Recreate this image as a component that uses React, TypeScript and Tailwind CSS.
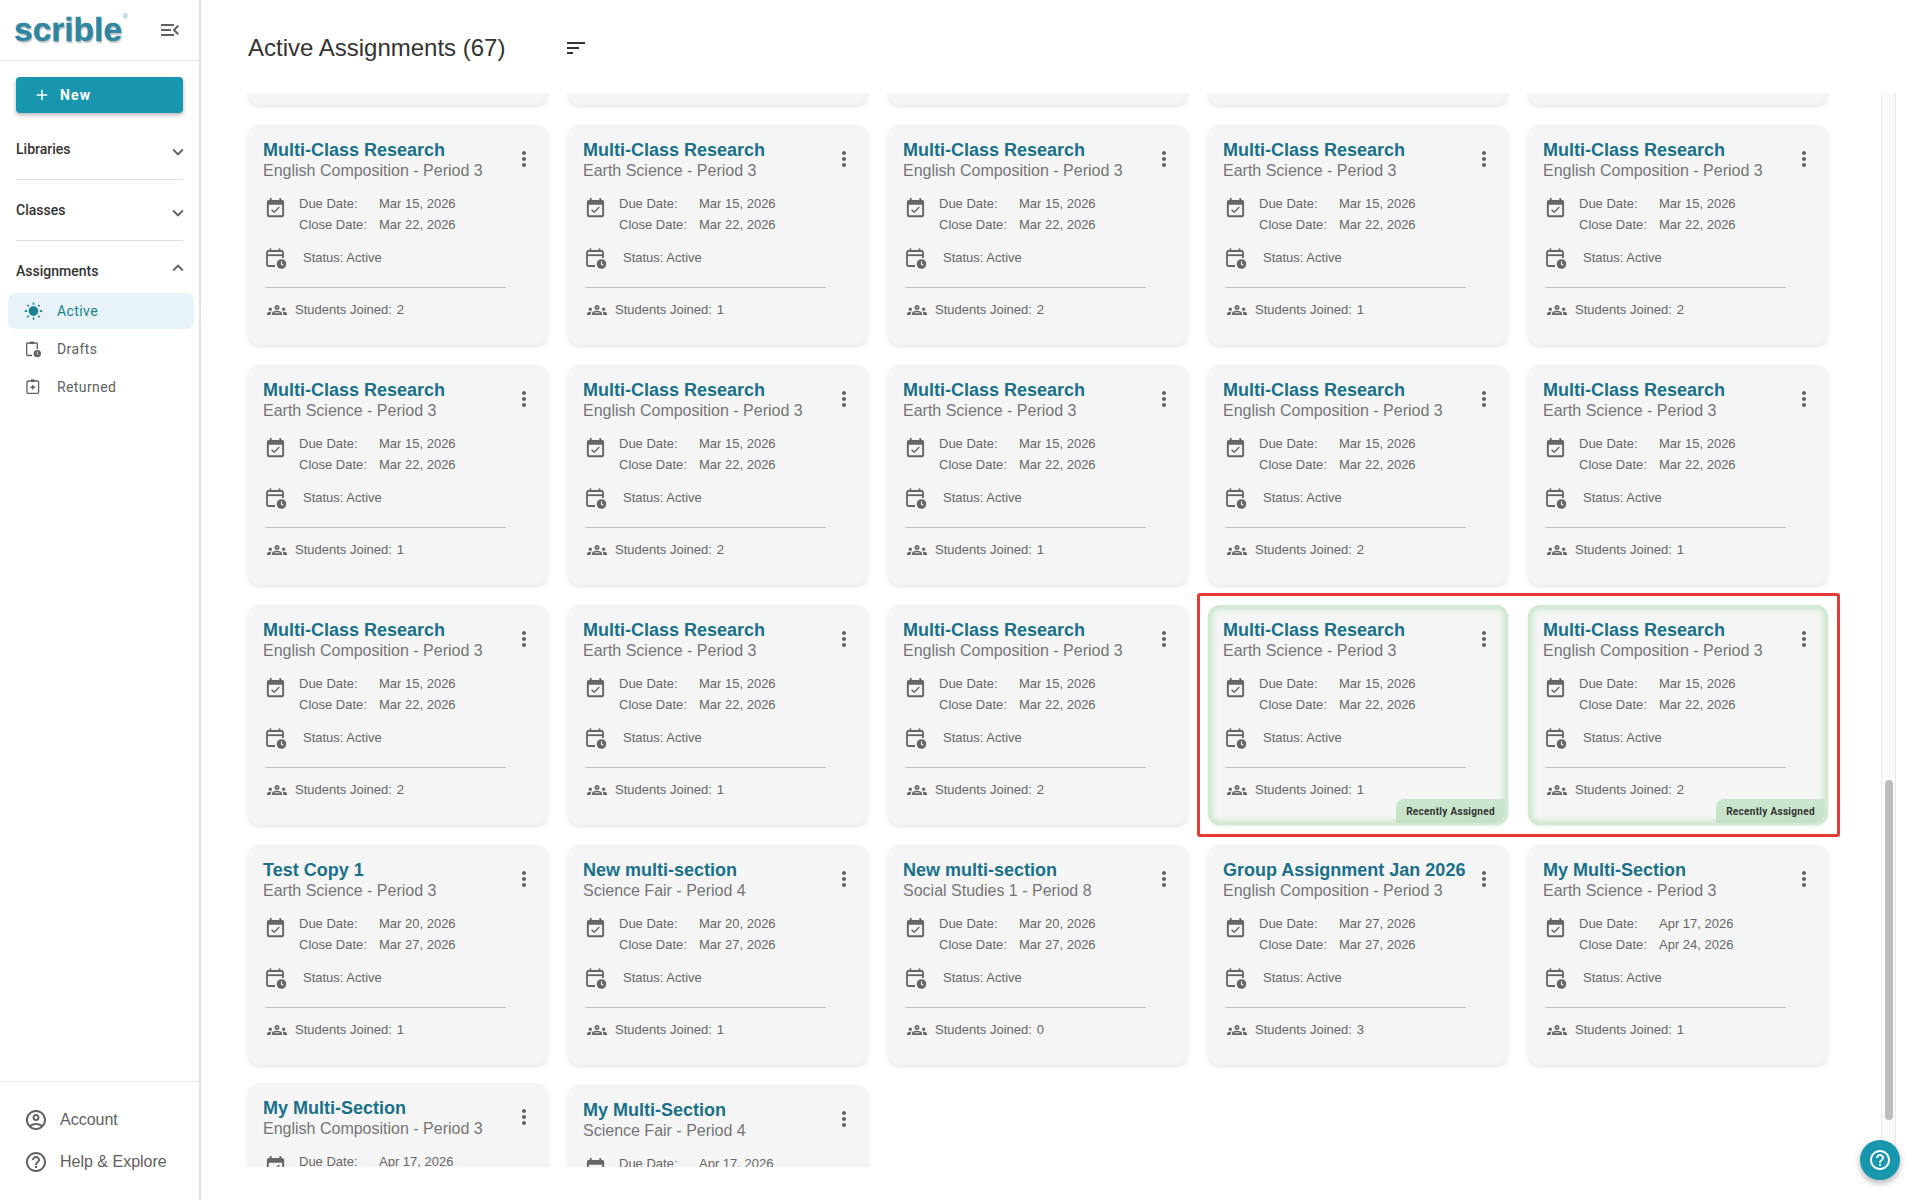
import { ReactNode } from 'react';

interface Assignment {
  title: string;
  subject: string;
  due: string;
  close: string;
  joined: number;
  recent?: boolean;
}

const ENGLISH = 'English Composition - Period 3';
const EARTH = 'Earth Science - Period 3';

function multiClass(subject: string, joined: number, recent = false): Assignment {
  return { title: 'Multi-Class Research', subject, due: 'Mar 15, 2026', close: 'Mar 22, 2026', joined, recent };
}

const rows: Assignment[] = [
  multiClass(ENGLISH, 2),
  multiClass(EARTH, 1),
  multiClass(ENGLISH, 2),
  multiClass(EARTH, 1),
  multiClass(ENGLISH, 2),

  multiClass(EARTH, 1),
  multiClass(ENGLISH, 2),
  multiClass(EARTH, 1),
  multiClass(ENGLISH, 2),
  multiClass(EARTH, 1),

  multiClass(ENGLISH, 2),
  multiClass(EARTH, 1),
  multiClass(ENGLISH, 2),
  multiClass(EARTH, 1, true),
  multiClass(ENGLISH, 2, true),

  { title: 'Test Copy 1', subject: EARTH, due: 'Mar 20, 2026', close: 'Mar 27, 2026', joined: 1 },
  { title: 'New multi-section', subject: 'Science Fair - Period 4', due: 'Mar 20, 2026', close: 'Mar 27, 2026', joined: 1 },
  { title: 'New multi-section', subject: 'Social Studies 1 - Period 8', due: 'Mar 20, 2026', close: 'Mar 27, 2026', joined: 0 },
  { title: 'Group Assignment Jan 2026', subject: ENGLISH, due: 'Mar 27, 2026', close: 'Mar 27, 2026', joined: 3 },
  { title: 'My Multi-Section', subject: EARTH, due: 'Apr 17, 2026', close: 'Apr 24, 2026', joined: 1 },
];

const lastRow: Assignment[] = [
  { title: 'My Multi-Section', subject: ENGLISH, due: 'Apr 17, 2026', close: 'Apr 24, 2026', joined: 1 },
  { title: 'My Multi-Section', subject: 'Science Fair - Period 4', due: 'Apr 17, 2026', close: 'Apr 24, 2026', joined: 1 },
];

function Icon({ d, size = 24, className = '' }: { d: string; size?: number; className?: string }) {
  return (
    <svg width={size} height={size} viewBox="0 0 24 24" fill="currentColor" className={`shrink-0 ${className}`}>
      <path d={d} />
    </svg>
  );
}

const ICONS = {
  menuOpen: 'M3 18h13v-2H3v2zm0-5h10v-2H3v2zm0-7v2h13V6H3zm18 9.59L17.42 12 21 8.41 19.59 7l-5 5 5 5L21 15.59z',
  sort: 'M3 18h6v-2H3v2zM3 6v2h18V6H3zm0 7h12v-2H3v2z',
  add: 'M19 13h-6v6h-2v-6H5v-2h6V5h2v6h6v2z',
  down: 'M16.59 8.59 12 13.17 7.41 8.59 6 10l6 6 6-6z',
  up: 'm12 8-6 6 1.41 1.41L12 10.83l4.59 4.58L18 14z',
  sun: 'M6.76 4.84l-1.8-1.79-1.41 1.41 1.79 1.79 1.42-1.41zM4 10.5H1v2h3v-2zm9-9.95h-2V3.5h2V.55zm7.45 3.91l-1.41-1.41-1.79 1.79 1.41 1.41 1.79-1.79zm-3.21 13.7l1.79 1.8 1.41-1.41-1.8-1.79-1.4 1.4zM20 10.5v2h3v-2h-3zm-8-5c-3.31 0-6 2.69-6 6s2.69 6 6 6 6-2.69 6-6-2.69-6-6-6zm-1 16.95h2V19.5h-2v2.95zm-7.45-3.91l1.41 1.41 1.79-1.8-1.41-1.41-1.79 1.8z',
  kebab: 'M12 8c1.1 0 2-.9 2-2s-.9-2-2-2-2 .9-2 2 .9 2 2 2zm0 2c-1.1 0-2 .9-2 2s.9 2 2 2 2-.9 2-2-.9-2-2-2zm0 6c-1.1 0-2 .9-2 2s.9 2 2 2 2-.9 2-2-.9-2-2-2z',
  calendarCheck: 'M16.53 11.06 15.47 10l-4.88 4.88-2.12-2.12-1.06 1.06L10.59 17l5.94-5.94zM19 3h-1V1h-2v2H8V1H6v2H5c-1.11 0-1.99.9-1.99 2L3 19c0 1.1.89 2 2 2h14c1.1 0 2-.9 2-2V5c0-1.1-.9-2-2-2zm0 16H5V8h14v11z',
  groups: 'M4 13c1.1 0 2-.9 2-2s-.9-2-2-2-2 .9-2 2 .9 2 2 2zm1.13 1.1c-.37-.06-.74-.1-1.13-.1-.99 0-1.93.21-2.78.58C.48 14.9 0 15.62 0 16.43V18h4.5v-1.61c0-.83.23-1.61.63-2.29zM20 13c1.1 0 2-.9 2-2s-.9-2-2-2-2 .9-2 2 .9 2 2 2zm4 3.43c0-.81-.48-1.53-1.22-1.85-.85-.37-1.79-.58-2.78-.58-.39 0-.76.04-1.13.1.4.68.63 1.46.63 2.29V18H24v-1.57zm-7.76-2.78C15.07 13.13 13.63 12.75 12 12.75c-1.63 0-3.07.39-4.24.9C6.68 14.13 6 15.21 6 16.39V18h12v-1.61c0-1.18-.68-2.26-1.76-2.74zM8.07 16c.09-.23.13-.39.91-.69.97-.38 1.99-.56 3.02-.56s2.05.18 3.02.56c.77.3.81.46.91.69H8.07zM12 8c.55 0 1 .45 1 1s-.45 1-1 1-1-.45-1-1 .45-1 1-1m0-2c-1.66 0-3 1.34-3 3s1.34 3 3 3 3-1.34 3-3-1.34-3-3-3z',
  account: 'M12 2C6.48 2 2 6.48 2 12s4.48 10 10 10 10-4.48 10-10S17.52 2 12 2zM7.35 18.5C8.66 17.56 10.26 17 12 17s3.34.56 4.65 1.5c-1.31.94-2.91 1.5-4.65 1.5s-3.34-.56-4.65-1.5zm10.79-1.38C16.45 15.8 14.32 15 12 15s-4.45.8-6.14 2.12C4.7 15.73 4 13.95 4 12c0-4.42 3.58-8 8-8s8 3.58 8 8c0 1.95-.7 3.73-1.86 5.12zM12 6c-1.93 0-3.5 1.57-3.5 3.5S10.07 13 12 13s3.5-1.57 3.5-3.5S13.93 6 12 6zm0 5c-.83 0-1.5-.67-1.5-1.5S11.17 8 12 8s1.5.67 1.5 1.5S12.83 11 12 11z',
  help: 'M11 18h2v-2h-2v2zm1-16C6.48 2 2 6.48 2 12s4.48 10 10 10 10-4.48 10-10S17.52 2 12 2zm0 18c-4.41 0-8-3.59-8-8s3.59-8 8-8 8 3.59 8 8-3.59 8-8 8zm0-14c-2.21 0-4 1.79-4 4h2c0-1.1.9-2 2-2s2 .9 2 2c0 2-3 1.75-3 5h2c0-2.25 3-2.5 3-5 0-2.21-1.79-4-4-4z',
};

function CalendarClockIcon() {
  return (
    <svg width="24" height="24" viewBox="0 0 24 24" fill="none" className="shrink-0">
      <path d="M12 20H5.5C4.7 20 4 19.3 4 18.5V6.5C4 5.7 4.7 5 5.5 5h13c.8 0 1.5.7 1.5 1.5V12" stroke="currentColor" strokeWidth="1.8" />
      <path d="M4 9.2h16" stroke="currentColor" strokeWidth="1.8" />
      <path d="M7.5 2.5v3.5M16.5 2.5v3.5" stroke="currentColor" strokeWidth="1.8" />
      <circle cx="18.5" cy="18" r="4.8" fill="currentColor" />
      <path d="M18.5 15.5v2.8l1.8 1" stroke="#f5f5f5" strokeWidth="1.1" />
    </svg>
  );
}

function DraftsIcon() {
  return (
    <svg width="18" height="18" viewBox="0 0 18 18" fill="none" className="shrink-0">
      <path d="M8 15.5H3.6c-.5 0-.9-.4-.9-.9V3.9c0-.5.4-.9.9-.9h8.8c.5 0 .9.4.9.9v5" stroke="currentColor" strokeWidth="1.3" />
      <path d="M6 1.6h4v2.4H6z" fill="currentColor" />
      <circle cx="13.3" cy="13.6" r="3.7" fill="currentColor" />
      <path d="M13.3 11.6v2.1l1.3.8" stroke="#fff" strokeWidth="0.8" />
    </svg>
  );
}

function ReturnedIcon() {
  return (
    <svg width="18" height="18" viewBox="0 0 18 18" fill="none" className="shrink-0">
      <rect x="3" y="3" width="11.6" height="12.4" rx="1.2" stroke="currentColor" strokeWidth="1.3" />
      <path d="M7 1.4h3.6V4H7z" fill="currentColor" />
      <path d="M8.8 7v4.6M6.5 9.3h4.6" stroke="currentColor" strokeWidth="1.4" />
    </svg>
  );
}

function SidebarSection({ label, open = false }: { label: string; open?: boolean }) {
  return (
    <div className="flex h-5 items-start justify-between">
      <span className="text-[14px] leading-5 font-medium text-[#333333]">{label}</span>
      <Icon d={open ? ICONS.up : ICONS.down} size={22} className={open ? '-mt-1 -mr-[6px] text-[#616161]' : 'mt-0.5 -mr-[6px] text-[#616161]'} />
    </div>
  );
}

function SidebarItem({ icon, label, active = false }: { icon: ReactNode; label: string; active?: boolean }) {
  return (
    <div className={`flex h-9 items-center rounded-lg pl-4 ${active ? 'bg-[#e7f3f8] text-[#1a7f8e]' : 'text-[#616161]'}`}>
      <span className="flex w-[18px] justify-center">{icon}</span>
      <span className="ml-[15px] text-[14px] tracking-[0.4px]">{label}</span>
    </div>
  );
}

function Sidebar() {
  return (
    <aside className="flex h-full w-[201px] shrink-0 flex-col border-r-2 border-[#e3e3e3] font-['Roboto',sans-serif]">
      <div className="flex h-[61px] items-center justify-between border-b border-[#ececec] pr-[17px] pl-[14px]">
        <div className="relative font-['Liberation_Sans',sans-serif] text-[33.5px] leading-none font-bold text-[#2e86a1] [-webkit-text-stroke:0.4px_#2e86a1] [text-shadow:1px_2px_1px_#c4c4c4]">
          scrible
          <span className="absolute top-0 -right-[6px] text-[7px] font-normal text-[#5fa9bf] [-webkit-text-stroke:0] [text-shadow:none]">®</span>
        </div>
        <Icon d={ICONS.menuOpen} className="text-[#616161]" />
      </div>

      <div className="px-4">
        <button className="mt-4 flex h-9 w-full items-center rounded bg-[#1896ad] pl-[17px] text-[14px] font-bold tracking-[1.2px] text-white shadow-[0_2px_4px_rgba(0,0,0,0.3)]">
          <Icon d={ICONS.add} size={18} />
          <span className="ml-[9px]">New</span>
        </button>
        <div className="mt-[26px]">
          <SidebarSection label="Libraries" />
        </div>
        <div className="mt-5 h-px bg-[#e0e0e0]" />
        <div className="mt-5">
          <SidebarSection label="Classes" />
        </div>
        <div className="mt-5 h-px bg-[#e0e0e0]" />
        <div className="mt-5">
          <SidebarSection label="Assignments" open />
        </div>
      </div>

      <div className="mt-3 flex flex-col gap-0.5 pr-[5px] pl-2">
        <SidebarItem active label="Active" icon={<Icon d={ICONS.sun} size={19} />} />
        <SidebarItem label="Drafts" icon={<DraftsIcon />} />
        <SidebarItem label="Returned" icon={<ReturnedIcon />} />
      </div>

      <div className="mt-auto flex h-[119px] flex-col gap-1 border-t border-[#ececec] pt-[19px] pl-6 font-['Liberation_Sans',sans-serif] text-[16px] text-[#616161]">
        <div className="flex h-[38px] items-center gap-3">
          <Icon d={ICONS.account} />
          <span>Account</span>
        </div>
        <div className="flex h-[38px] items-center gap-3">
          <Icon d={ICONS.help} />
          <span>Help &amp; Explore</span>
        </div>
      </div>
    </aside>
  );
}

// partial: card cut off by the bottom of the list, only the first date row is in view
function AssignmentCard({ item, partial = false, className = '' }: { item: Assignment; partial?: boolean; className?: string }) {
  return (
    <div
      className={`relative h-[220px] rounded-xl bg-[#f5f5f5] pt-[15px] pl-[15px] text-[13px] text-[#666666] ${
        item.recent
          ? 'shadow-[inset_0_0_6px_4px_#c8e6c9,0_1px_3px_rgba(0,0,0,0.1)]'
          : 'shadow-[0_2px_4px_rgba(0,0,0,0.1)]'
      } ${className}`}
    >
      <div className="flex justify-between pr-3">
        <div>
          <div className="text-[18px] leading-5 font-bold whitespace-nowrap text-[#19708a]">{item.title}</div>
          <div className="mt-px text-[16px] leading-5 text-[#757575]">{item.subject}</div>
        </div>
        <Icon d={ICONS.kebab} className="mt-[7px] text-[#616161]" />
      </div>

      <div className="mt-3 flex">
        <span className="flex h-[21px] w-6 justify-center pt-1 text-[#666666]">
          <Icon d={ICONS.calendarCheck} size={23} />
        </span>
        <div className="ml-3 leading-[21px]">
          <div className="flex">
            <span className="w-20">Due Date:</span>
            <span>{item.due}</span>
          </div>
          {!partial && (
            <div className="flex">
              <span className="w-20">Close Date:</span>
              <span>{item.close}</span>
            </div>
          )}
        </div>
      </div>

      {!partial && (
        <>
          <div className="mt-[13px] flex h-5 items-center">
            <CalendarClockIcon />
            <span className="ml-4">Status: Active</span>
          </div>

          <div className="mt-[19px] ml-0.5 h-px w-[241px] bg-[#bdbdbd]" />

          <div className="mt-3 ml-1 flex h-5 items-center">
            <Icon d={ICONS.groups} size={20} />
            <span className="ml-2">Students Joined:</span>
            <span className="ml-[5px]">{item.joined}</span>
          </div>
        </>
      )}

      {item.recent && (
        <div className="absolute right-[3px] bottom-[2px] flex h-6 w-[109px] items-center justify-center rounded-tl-lg rounded-br-xl bg-gradient-to-b from-[#cde6cf] to-[#c3e0c5] font-['Roboto',sans-serif] text-[10px] font-bold tracking-[0.3px] text-[#333333]">
          Recently Assigned
        </div>
      )}
    </div>
  );
}

export default function App() {
  return (
    <div className="relative flex h-[1200px] w-[1920px] overflow-hidden bg-white font-['Liberation_Sans',sans-serif]">
      <Sidebar />

      <main className="flex h-full min-w-0 flex-1 flex-col">
        <header className="flex h-[93px] shrink-0 items-center pt-0.5 pl-[47px]">
          <h1 className="text-[24px] text-[#333333]">Active Assignments (67)</h1>
          <Icon d={ICONS.sort} className="ml-[59px] text-[#333333]" />
        </header>

        <div className="flex h-[1074px] shrink-0">
          <div className="w-[1680px] shrink-0 overflow-hidden pl-[47px]">
            <div className="relative -mt-[208px] grid grid-cols-[repeat(5,300px)] gap-x-5 gap-y-5">
              {/* row scrolled past the top, only its bottom edge shows */}
              {[0, 1, 2, 3, 4].map((i) => (
                <div key={i} className="h-[220px] rounded-xl bg-[#f5f5f5] shadow-[0_2px_4px_rgba(0,0,0,0.1)]" />
              ))}
              {rows.map((item, i) => (
                <AssignmentCard key={i} item={item} />
              ))}
              <AssignmentCard item={lastRow[0]} partial className="-mt-0.5" />
              <AssignmentCard item={lastRow[1]} partial />

              <div className="pointer-events-none absolute top-[708px] left-[949px] h-[244px] w-[643px] rounded-[3px] border-[3px] border-[#e53935]" />
            </div>
          </div>

          <div className="h-full w-[15px] border-x border-[#e8e8e8] bg-[#fafafa]">
            <div className="mx-auto mt-[687px] h-[340px] w-2 rounded-full bg-[#bdbdbd]" />
          </div>
        </div>
      </main>

      <button className="absolute right-5 bottom-5 flex h-10 w-10 items-center justify-center rounded-full bg-[#1896ad] text-white shadow-[0_3px_6px_rgba(0,0,0,0.3)]">
        <Icon d={ICONS.help} />
      </button>
    </div>
  );
}
